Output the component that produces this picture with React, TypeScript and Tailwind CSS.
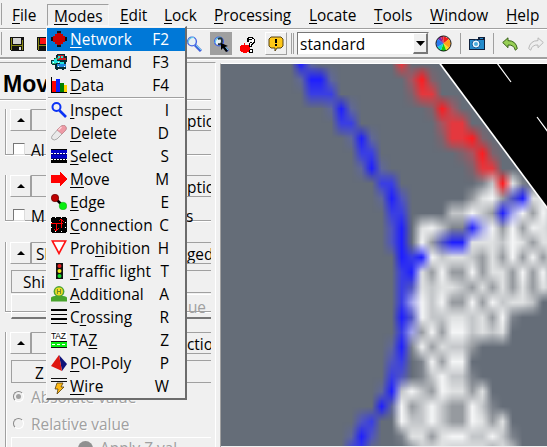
import { useEffect, useRef, type ReactNode } from "react";

const PALETTE: Record<string, string> = {
  ".": "#656d78", B: "#1f1fff", b: "#3a3ee4", v: "#5055c0", u: "#60689a", V: "#a4a6ee",
  R: "#ff1c20", r: "#e4383e", p: "#a85560", q: "#7f636d", W: "#f4f5f6", w: "#dfe1e2",
  l: "#c3c6c9", g: "#969a9f", d: "#7d838c",
};

// One character per texel of the background tile.
const TEXELS = [
  "Bu........r...............",
  "uBBu.......pRq............",
  ".bbb.......qrr............",
  "...uBu.......qRp..........",
  "....bb........prr.........",
  ".....uBu......qrrRq.......",
  "......bb........qpRq......",
  "......uBu........qrr......",
  "........bb........dlRwd...",
  "........uBv......gwWgvBwww",
  ".........bb....llWlgBVWgWl",
  ".........vB.wWlddBVWgWgWwl",
  ".........vB.WgvBBwwwlWwgww",
  "..........BbBWlwwlgwgWgWgw",
  "..........bBwgWggWgwwgWgWg",
  "..........bvwlwwlgwgwgwgwl",
  "..........bVWlWggWgWlwwl..",
  "..........BvWllwwlwgWd....",
  "..........bVgWgWWlwlw.....",
  ".........uBdWgwllg........",
  ".........vb.dWgWW.........",
  ".........bv.dlWlld........",
  "........uBlWlgWwwgw.......",
  "........BuWglWlggWld......",
  "......vb..WllWlggWwgw.....",
  ".....uBv..dwwgwWWllWld....",
  ".....bb....dlwwllwwgwl....",
];

function MapView() {
  const ref = useRef<HTMLCanvasElement>(null);
  useEffect(() => {
    const ctx = ref.current!.getContext("2d")!;
    const tile = document.createElement("canvas");
    // Two spare columns on the left fade the road into the plain ground.
    tile.width = 28;
    tile.height = 27;
    const t = tile.getContext("2d")!;
    t.fillStyle = PALETTE["."];
    t.fillRect(0, 0, 28, 27);
    TEXELS.forEach((row, y) =>
      [...row].forEach((c, x) => {
        t.fillStyle = PALETTE[c];
        t.fillRect(x + 2, y, 1, 1);
      })
    );
    ctx.fillStyle = PALETTE["."];
    ctx.fillRect(0, 0, 326, 382);
    ctx.imageSmoothingEnabled = true;
    ctx.imageSmoothingQuality = "low";
    ctx.drawImage(tile, 54.5, -7.6, 28 * 10.08, 27 * 14.88);
    ctx.fillStyle = "#000";
    ctx.beginPath();
    ctx.moveTo(219, 0);
    ctx.lineTo(326, 144);
    ctx.lineTo(326, 0);
    ctx.fill();
    ctx.strokeStyle = "#fff";
    ctx.lineWidth = 1.7;
    ctx.beginPath();
    ctx.moveTo(218.5, -1);
    ctx.lineTo(327, 145);
    ctx.stroke();
    ctx.lineWidth = 1.2;
    ctx.beginPath();
    ctx.moveTo(276, -1);
    ctx.lineTo(290, 18);
    ctx.moveTo(316, 53);
    ctx.lineTo(327, 68);
    ctx.stroke();
  }, []);
  return <canvas ref={ref} width={326} height={382} className="block" />;
}

function Svg({ children }: { children: ReactNode }) {
  return (
    <svg width="16" height="16" viewBox="0 0 16 16" className="block shrink-0" shapeRendering="crispEdges">
      {children}
    </svg>
  );
}

const icons: Record<string, ReactNode> = {
  network: (
    <Svg>
      <path fill="#111" d="M6 0h4v3H6zM6 13h4v3H6zM0 6h3v4H0zM13 6h3v4h-3z" />
      <path fill="#c80000" d="M6 2h4v1h2v2h2v6h-2v2h-2v1H6v-1H4v-2H2V5h2V3h2z" />
    </Svg>
  ),
  demand: (
    <Svg>
      <path fill="#052d33" d="M6 0h8v2h2v6h-1v7h-2v1h-2v-1H7v1H5v-1H4v-4H1v-1H0V6h3V4h2V1h1z" />
      <path fill="#c51c20" d="M7 1h6v3h2v2H6V3h1z" />
      <path fill="#22e6e1" d="M7 2h2v2H7zM10 2h2v2h-2zM3 5h3v2H3zM1 7h8v2H1zM9 8h4v2H9z" />
      <path fill="#2189de" d="M6 10h9v3H6z" />
      <path fill="#26b67a" d="M4 4h4v1H4zM1 9h4v1H1z" />
      <path fill="#fff" d="M2 8h1v1H2zM7 8h1v1H7zM7 12h1v1H7zM13 12h1v1h-1z" />
    </Svg>
  ),
  data: (
    <Svg>
      <path fill="#000" d="M0 0h1v15h15v1H0z" />
      <path fill="#f00" d="M1 4h4v11H1z" />
      <path fill="#0a20ff" d="M5 2h4v13H5z" />
      <path fill="#008000" d="M9 6h4v9H9z" />
      <path fill="#ffd000" d="M13 8h3v7h-3z" />
    </Svg>
  ),
  inspect: (
    <Svg>
      <g fill="none" stroke="#0a32f5" shapeRendering="auto">
        <circle cx="5.5" cy="5" r="4" strokeWidth="2" />
        <path d="M8.5 8.5 15 15" strokeWidth="2.6" />
      </g>
    </Svg>
  ),
  delete: (
    <Svg>
      <g shapeRendering="auto">
        <path d="m1 11 7-8q5-5 7-1 1 2-1 4l-8 8q-3 2-5 0-1-1 0-3z" fill="#e9e9e9" stroke="#999" strokeWidth=".8" />
        <path d="m6 5 2-2q5-5 7-1 1 2-1 4l-3 3z" fill="#ee9aa5" stroke="#c7828b" strokeWidth=".7" />
        <path d="m7.5 5 3-3" stroke="#ffd8dc" strokeWidth="1.5" />
      </g>
    </Svg>
  ),
  select: (
    <Svg>
      <path fill="#000080" d="M0 1h16v14H0z" />
      <path fill="#0000c8" d="M0 2h16v3H0zM0 7h16v3H0z" />
      <path fill="#000" d="M0 1h16v1H0zM0 11h16v4H0z" />
      <path stroke="#fff" strokeDasharray="2 1" d="M0 5.5h16M0 11.5h16" />
    </Svg>
  ),
  move: <Svg><path fill="#f00" d="M0 4h9V1h1v1h1v1h1v1h1v1h1v1h1v1h1v2h-1v1h-1v1h-1v1h-1v1h-1v1h-1v1H9v-3H0z" /></Svg>,
  edge: (
    <Svg>
      <g shapeRendering="auto">
        <path stroke="#000" strokeWidth="2.5" d="m4 4 8 8" />
        <circle cx="4" cy="4" r="3.7" fill="#be0000" stroke="#650000" strokeWidth=".7" />
        <circle cx="12" cy="12" r="3.8" fill="#08ef10" stroke="#14a515" strokeWidth=".5" />
      </g>
    </Svg>
  ),
  connection: (
    <Svg>
      <path fill="#000" d="M1 0h14v1h1v14h-1v1H1v-1H0V1h1z" />
      <path stroke="#fff" strokeDasharray="1 2" d="M4.5 0v2M10.5 0v2M4.5 14v2M10.5 14v2M0 5.5h2M14 5.5h2M0 10.5h2M14 10.5h2" />
      <path stroke="#f00" fill="none" d="M0 6.5h12M5.5 6v8M10.5 2v9M3 12l2 2 3-3M8 4l2-2 3 3" />
    </Svg>
  ),
  prohibition: <Svg><path d="M1.3 1h13.4L8 13.5z" fill="#fff" stroke="#f11" strokeWidth="1.6" shapeRendering="auto" /></Svg>,
  traffic: (
    <Svg>
      <path fill="#111" d="M5 0h7v16H5z" />
      <g shapeRendering="auto"><circle cx="8.5" cy="3" r="2" fill="#e52020" /><circle cx="8.5" cy="8" r="2" fill="#f4e720" /><circle cx="8.5" cy="13" r="2" fill="#13df2e" /></g>
    </Svg>
  ),
  additional: (
    <Svg>
      <g shapeRendering="auto">
        <path d="M0 15.5V12q0-1.5 4-2h8q4 .5 4 2v3.5z" fill="#49a42d" />
        <circle cx="8" cy="5.5" r="5.4" fill="#4ba435" /><circle cx="8" cy="5.5" r="3.9" fill="#f3dd24" />
        <path d="M6.4 3v5M9.6 3v5M6.4 5.5h3.2" stroke="#6c882d" />
      </g>
    </Svg>
  ),
  crossing: <Svg><path fill="#000" d="M0 0h16v2H0zM0 5h16v1H0zM0 9h16v2H0zM0 14h16v1H0z" /></Svg>,
  taz: (
    <span className="flex h-4 w-4 shrink-0 flex-col overflow-hidden bg-white">
      <span className="h-2 whitespace-nowrap font-[family-name:'Liberation_Sans',sans-serif] text-[8.5px] leading-[8px] tracking-[-0.2px] text-black">TAZ</span>
      <Svg><path fill="#08ef10" d="M0 1h16v7H0z" /><path stroke="#fff" strokeDasharray="3 2" d="M1 4.5h15" /><path stroke="#111" d="M0 1.5h16M0 7.5h16" /></Svg>
    </span>
  ),
  poi: (
    <Svg>
      <g shapeRendering="auto"><path fill="#101479" d="m8 0 8 9-5 7z" /><path fill="#df1710" d="M8 0 0 11l11 5z" /></g>
    </Svg>
  ),
  wire: (
    <Svg>
      <path stroke="#111" d="M0 .5h16M0 3.5h16" />
      <path d="M6 5h6l-2 4h3l-7 7 1-5H4z" fill="#ffb914" stroke="#59400d" strokeWidth=".8" shapeRendering="auto" />
    </Svg>
  ),
};

const MODES: [string, string, number, string][] = [
  ["network", "Network", 0, "F2"], ["demand", "Demand", 0, "F3"], ["data", "Data", 0, "F4"],
  ["inspect", "Inspect", 0, "I"], ["delete", "Delete", 0, "D"], ["select", "Select", 0, "S"],
  ["move", "Move", 0, "M"], ["edge", "Edge", 0, "E"], ["connection", "Connection", 0, "C"],
  ["prohibition", "Prohibition", 3, "H"], ["traffic", "Traffic light", 0, "T"], ["additional", "Additional", 0, "A"],
  ["crossing", "Crossing", 1, "R"], ["taz", "TAZ", 2, "Z"], ["poi", "POI-Poly", 0, "P"], ["wire", "Wire", 0, "W"],
];

function Mnemonic({ text, at }: { text: string; at: number }) {
  return (
    <span className="whitespace-pre">
      {text.slice(0, at)}
      <span className="underline decoration-1 underline-offset-2 [text-decoration-skip-ink:none]">{text[at]}</span>
      {text.slice(at + 1)}
    </span>
  );
}

function ModesMenu() {
  return (
    <div className="absolute left-[46px] top-[26px] z-10 h-[374px] w-[141px] border border-b-2 border-r-2 border-[#f8f8f8] border-b-[#6c6c6c] border-r-[#6c6c6c] bg-[#f0f0f0] pt-px">
      {MODES.map(([icon, label, at, key], i) => (
        <div key={icon}>
          {i === 3 && <div className="mx-px h-[2px] border-b border-white bg-[#a0a0a0]" />}
          <div className={i === 0 ? "flex h-[23px] items-center bg-[#0078d7] pl-1 pr-[16px] text-white" : "flex h-[23px] items-center pl-1 pr-[16px]"}>
            <span className="-mt-px">{icons[icon]}</span>
            <span className="ml-[3px] flex-1 tracking-[0.08px]"><Mnemonic text={label} at={at} /></span>
            <span>{key}</span>
          </div>
        </div>
      ))}
    </div>
  );
}

const MENUBAR: [string, string, string][] = [
  ["File", "w-[19px]", ""], ["Modes", "w-[62px]", "on"], ["Edit", "w-[28px]", ""], ["Lock", "w-[34px]", ""],
  ["Processing", "w-[79px]", ""], ["Locate", "w-[49px]", ""], ["Tools", "w-[40px]", ""], ["Window", "w-[60px]", ""], ["Help", "w-[35px]", ""],
];

function MenuBar() {
  return (
    <div className="flex h-[29px] items-center border-b border-[#a0a0a0]">
      <div className="mr-[10px] h-[22px] w-[2px] shrink-0 border-r border-[#a0a0a0]" />
      {MENUBAR.map(([m, w, on]) => (
        <div key={m} className={on ? `${w} mr-[11px] mt-[2px] h-[22px] shrink-0 border border-[#f8f8f8] border-l-[#a0a0a0] border-t-[#a0a0a0] pl-[6px] leading-[23px]` : `${w} mr-[16px] shrink-0 pt-[3px] leading-[22px]`}>
          <Mnemonic text={m} at={0} />
        </div>
      ))}
    </div>
  );
}

function Floppy({ red }: { red?: boolean }) {
  return (
    <Svg>
      <path fill="#111" d="M1 1h14v14H2v-1H1z" />
      <path fill="#8a8a16" d="M2 2h1v12H2zM13 4h1v10h-1zM3 9h10v1H3z" />
      <path fill={red ? "#f11" : "#d4d4d4"} d="M4 2h8v6H4z" />
      <path fill="#ddd" d="M10 11h2v3h-2z" />
    </Svg>
  );
}

function Lens({ inspect }: { inspect?: boolean }) {
  return (
    <Svg>
      <g shapeRendering="auto" fill="none">
        <path d="m9 9 6 6" stroke="#4062dc" strokeWidth="3" /><path d="m10 9 5 5" stroke="#6ed7ef" />
        <circle cx="6" cy="5.5" r="4.4" fill="#e8f1f3" stroke="#4264e6" strokeWidth="1.4" />
        <path d="M2 7Q3 1 8 1.5" stroke="#67cae8" strokeWidth="1.2" />
        {inspect && <><path d="M5 3q4-2 4 2T5 8" stroke="#26343b" strokeWidth="2" /><path d="m8 7 7 3-3 1 3 4-2 1-3-4-2 2z" fill="#000" /></>}
      </g>
    </Svg>
  );
}

function Undo({ redo }: { redo?: boolean }) {
  return (
    <svg width="16" height="14" viewBox="0 0 16 14" className={redo ? "-scale-x-100" : ""}>
      <path d="M.7 5.5 6 .8v2.8q8 0 9.3 8l-2 1.6Q12 7.6 6 8v2.7z" fill={redo ? "#eee" : "#97cf55"} stroke={redo ? "#b8b8b8" : "#39621b"} />
    </svg>
  );
}

function Toolbar() {
  return (
    <div className="flex h-[30px] items-center border-b-2 border-t border-b-[#a0a0a0] border-t-white">
      <div className="h-[23px] w-[2px] shrink-0 border-r border-[#a0a0a0]" />
      <div className="ml-[7px]"><Floppy /></div>
      <div className="ml-[11px]"><Floppy red /></div>
      <div className="ml-[134px]"><Lens /></div>
      <div className="ml-[8px] flex h-[23px] w-[22px] items-center justify-center bg-[#a0a0a0]"><Lens inspect /></div>
      <div className="ml-[8px] mt-[2px]">
        <Svg>
          <path fill="#000" d="M8 0h5v1h1v1h1v4h-1v1h-1v1h-1v2H9V6h1V5h2V3H9v2H7V1h1zM9 12h4v4H9z" />
          <path fill="#fff" d="M9 1h3v1H9zM12 2h2v3h-1v1h-1v1h-1v2h-1V6h2zM10 13h2v2h-2z" />
          <path fill="#f00" d="M1 8h3V6h1v2h4v2h1v3H9v2H7v1H3v-1H1v-1H0V9h1z" />
        </Svg>
      </div>
      <div className="ml-[9px] flex h-[23px] w-[22px] items-center justify-center border border-l-white border-t-white border-b-[#a0a0a0] border-r-[#a0a0a0]">
        <Svg><path d="M3 1h10l2 2v7l-2 2H9l-2 3v-3H3l-2-2V3z" fill="#ffc818" stroke="#594515" shapeRendering="auto" /><path fill="#000" d="M7 3h2v4H7zM7 8h2v2H7z" /></Svg>
      </div>
      <div className="ml-[4px] h-[21px] w-[3px] border-x border-[#a0a0a0]" />
      <div className="ml-[3px] flex h-[23px] w-[132px] border border-[#777] border-b-[#eee] border-r-[#eee] bg-white pl-[2px]">
        <span className="flex-1 leading-[23px] tracking-[0.1px]">standard</span>
        <span className="flex w-[15px] items-center justify-center border border-b-2 border-r-2 border-b-[#777] border-r-[#777] border-l-white border-t-white bg-[#f0f0f0]">
          <svg width="9" height="5" className="shrink-0"><path d="M0 0h9L4.5 5z" /></svg>
        </span>
      </div>
      <svg width="17" height="17" viewBox="0 0 18 18" className="ml-[6px] shrink-0">
        <path fill="#f21c18" d="M9 9V1l6 3z" /><path fill="#ff9e18" d="m9 9 6-5 2 5-2 5z" /><path fill="#f7e51d" d="m9 9 6 5-3 3z" />
        <path fill="#12c916" d="m9 9 3 8H6z" /><path fill="#15d7cf" d="m9 9-3 8-4-4z" /><path fill="#2779ef" d="m9 9-7 4-1-5 2-4z" /><path fill="#8226a5" d="M9 9 3 4l3-3z" /><path fill="#c91c48" d="M9 9 6 1h3z" />
        <circle cx="9" cy="9" r="8" fill="none" stroke="#111" />
      </svg>
      <div className="ml-[8px] h-[21px] w-px bg-[#a0a0a0]" />
      <div className="ml-[8px]">
        <Svg><path fill="#10213c" d="M0 3h9V1h7v13H0z" /><path fill="#248ccc" d="M1 4h14v9H1zM11 2h3v1h-3z" /><g shapeRendering="auto"><circle cx="7" cy="8" r="4" fill="#edf7fc" stroke="#165f9b" /><circle cx="7" cy="8" r="2" fill="#4baddc" /></g></Svg>
      </div>
      <div className="ml-[8px] mr-[8px] h-[21px] w-px bg-[#a0a0a0]" />
      <Undo />
      <div className="ml-[10px]"><Undo redo /></div>
    </div>
  );
}

function Group({ right, title, children, height }: { right: string; title?: string; children: ReactNode; height: string }) {
  return (
    <div className={`${height} ml-[5px] shrink-0 pt-[11px]`}>
      <div className="h-full border-b border-l border-[#a0a0a0] shadow-[0_1px_0_#fff,inset_1px_0_0_#fff]">
        <div className="-mt-[11px] ml-[4px] flex h-[22px]">
          <div className="flex w-[21px] items-center justify-center border border-b-[#a0a0a0] border-r-[#a0a0a0] border-l-white border-t-white bg-[#f0f0f0]">
            <svg width="8" height="4"><path d="M0 4h8L4 0z" /></svg>
          </div>
          <div className="flex flex-1 justify-between border-y border-l border-[#a0a0a0] bg-[#f0f0f0] pl-[4px] leading-[23px]">
            <span>{title}</span>
            <span className="w-[24px] overflow-hidden">{right}</span>
          </div>
        </div>
        {children}
      </div>
    </div>
  );
}

function Check({ label, right }: { label: string; right?: string }) {
  return (
    <div className="flex h-[33px] items-center pl-[7px] pt-[3px]">
      <div className="h-[12px] w-[12px] border border-l-[#777] border-t-[#777] border-b-[#ddd] border-r-[#ddd] bg-white" />
      <span className="ml-[6px] flex-1 pt-[3px]">{label}</span>
      <span className="w-[25px] pt-[3px]">{right}</span>
    </div>
  );
}

function Radio({ label, on }: { label: string; on?: boolean }) {
  return (
    <div className="flex h-[27px] items-center pl-[7px] text-[#a0a0a0] [text-shadow:1px_1px_#fff]">
      <div className="flex h-[11px] w-[11px] items-center justify-center rounded-full border border-b-white border-l-[#888] border-r-white border-t-[#888]">
        {on && <div className="h-[5px] w-[5px] rounded-full bg-[#a0a0a0]" />}
      </div>
      <span className="ml-[7px] pt-[3px]">{label}</span>
    </div>
  );
}

function SidePanel() {
  return (
    <div className="mt-[2px] flex h-full w-[216px] shrink-0 flex-col overflow-hidden border-r border-t border-r-white border-t-[#a0a0a0] pr-[4px]">
      <div className="mb-[9px] h-[37px] shrink-0 border-b border-[#a0a0a0] pl-[3px] pt-[3px] font-[family-name:'Liberation_Sans',sans-serif] text-[23px] font-bold leading-[37px] shadow-[0_1px_#fff]">Move</div>
      <Group right="ption" height="h-[57px]"><Check label="Al" /></Group>
      <div className="h-[9px] shrink-0" />
      <Group right="ption" height="h-[57px]"><Check label="M" right="s" /></Group>
      <div className="h-[10px] shrink-0" />
      <Group right="ged" title="Sl" height="h-[81px]">
        <div className="ml-[5px] mt-[6px] h-[23px] border-y border-l border-[#a0a0a0] pl-[11px] leading-[23px]">Shi</div>
        <div className="ml-[5px] mt-px flex h-[25px] justify-end border-b-2 border-l border-t border-b-[#777] border-l-white border-t-white pr-[5px] leading-[26px] text-[#a0a0a0]">ue</div>
      </Group>
      <div className="h-[9px] shrink-0" />
      <Group right="ction" height="h-[130px]">
        <div className="ml-[5px] mt-[6px] h-[23px] border-y border-l border-[#a0a0a0] pl-[23px] leading-[25px]">Z</div>
        <Radio label="Absolute value" on />
        <Radio label="Relative value" />
        <div className="ml-[5px] flex h-[25px] border-l border-t border-white pl-[66px] text-[#a0a0a0]">
          <div className="mr-[7px] mt-[3px] h-[15px] w-[15px] shrink-0 rounded-full bg-[#909090]" />
          <span className="whitespace-nowrap leading-[22px]">Apply Z val</span>
        </div>
      </Group>
    </div>
  );
}

export default function App() {
  return (
    <div className="relative flex h-[447px] w-[547px] flex-col overflow-hidden bg-[#f0f0f0] font-['Open_Sans','Noto_Sans',sans-serif] text-[15.4px] leading-[22px] text-black">
      <MenuBar />
      <Toolbar />
      <div className="flex min-h-0 flex-1 border-t border-white">
        <SidePanel />
        <div className="ml-[4px] mt-[3px] shrink-0 border-l border-t border-l-[#a0a0a0] border-t-white"><MapView /></div>
      </div>
      <ModesMenu />
    </div>
  );
}
